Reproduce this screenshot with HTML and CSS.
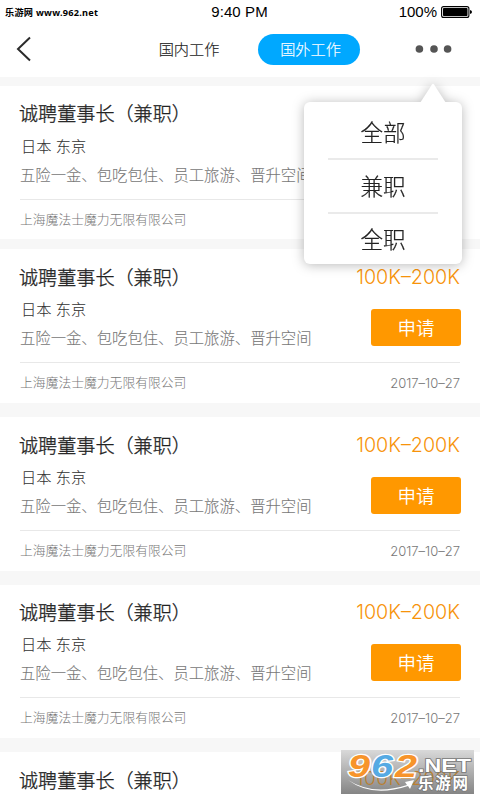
FILE: index.html
```html
<!DOCTYPE html>
<html lang="zh-CN">
<head>
<meta charset="utf-8">
<title>国外工作</title>
<link rel="stylesheet" href="styles.css">
</head>
<body>
<div class="screen">
  <header class="header">
    <div class="status">
      <span class="source">乐游网 www.962.net</span>
      <span class="clock">9:40 PM</span>
      <span class="battery">100%
        <svg width="31" height="12" viewBox="0 0 31 12"><rect x=".6" y=".6" width="27.3" height="10.8" rx="2" fill="none" stroke="#000" stroke-width="1.1"/><rect x="2" y="2" width="24.5" height="8" rx=".7"/><path d="M29 4Q31 4.3 31 6T29 8Z"/></svg>
      </span>
    </div>
    <nav class="nav">
      <svg class="back" width="16" height="26" viewBox="0 0 16 26"><path d="M14 1.5 2 13l12 11.5" fill="none" stroke="#2b2b2b" stroke-width="2"/></svg>
      <span class="tab">国内工作</span>
      <span class="tab active">国外工作</span>
      <svg class="more" width="38" height="8" viewBox="0 0 38 8" fill="#555"><circle cx="4.4" cy="4" r="3.8"/><circle cx="19" cy="4" r="3.8"/><circle cx="32.6" cy="4" r="3.8"/></svg>
    </nav>
  </header>
  <main class="list">
    <article class="card first">
      <div class="row top"><h2>诚聘董事长（兼职）</h2></div>
      <div class="row body"><div><p class="place">日本 东京</p><p class="desc">五险一金、包吃包住、员工旅游、晋升空间</p></div></div>
      <div class="row foot"><span>上海魔法士魔力无限有限公司</span></div>
    </article>
    <article class="card">
      <div class="row top"><h2>诚聘董事长（兼职）</h2><b class="pay">100K–200K</b></div>
      <div class="row body"><div><p class="place">日本 东京</p><p class="desc">五险一金、包吃包住、员工旅游、晋升空间</p></div><span class="apply">申请</span></div>
      <div class="row foot"><span>上海魔法士魔力无限有限公司</span><time>2017–10–27</time></div>
    </article>
    <article class="card">
      <div class="row top"><h2>诚聘董事长（兼职）</h2><b class="pay">100K–200K</b></div>
      <div class="row body"><div><p class="place">日本 东京</p><p class="desc">五险一金、包吃包住、员工旅游、晋升空间</p></div><span class="apply">申请</span></div>
      <div class="row foot"><span>上海魔法士魔力无限有限公司</span><time>2017–10–27</time></div>
    </article>
    <article class="card short">
      <div class="row top"><h2>诚聘董事长（兼职）</h2><b class="pay">100K–200K</b></div>
      <div class="row body"><div><p class="place">日本 东京</p><p class="desc">五险一金、包吃包住、员工旅游、晋升空间</p></div><span class="apply">申请</span></div>
      <div class="row foot"><span>上海魔法士魔力无限有限公司</span><time>2017–10–27</time></div>
    </article>
    <article class="card">
      <div class="row top"><h2>诚聘董事长（兼职）</h2></div>
    </article>
  </main>
  <div class="menu">
    <svg class="arrow" width="26" height="20" viewBox="0 0 26 20"><path d="M0 20 12 1.5Q13 0 14 1.5L26 20Z" fill="#fff"/></svg>
    <span>全部</span><span>兼职</span><span>全职</span>
  </div>
  <svg class="mark" width="133" height="44" viewBox="0 0 133 44">
    <defs><linearGradient id="g" x1="0" y1="0" x2="0" y2="1"><stop offset="0" stop-color="#d9d9d9"/><stop offset="1" stop-color="#858585"/></linearGradient></defs>
    <rect width="133" height="44" fill="url(#g)"/>
    <text class="mark-pay" x="15" y="35" textLength="104">100K–200K</text>
    <g class="mark-num"><text x="7" y="27" textLength="22" lengthAdjust="spacingAndGlyphs" fill="#f7942b">9</text><text x="30" y="27" textLength="22" lengthAdjust="spacingAndGlyphs" fill="#55aae3">6</text><text x="54" y="27" textLength="22" lengthAdjust="spacingAndGlyphs" fill="#f7942b">2</text></g>
    <path d="M7 30Q32 46 66 35l-2-3 9-2-4 9-2-3Q31 48 7 30Z" fill="#fff"/>
    <text class="mark-net" x="77" y="22" textLength="53" lengthAdjust="spacingAndGlyphs">.NET</text>
    <text class="mark-cn" x="77" y="39" textLength="50">乐游网</text>
  </svg>
</div>
</body>
</html>
```
FILE: styles.css
```css
* { box-sizing: border-box; margin: 0; padding: 0; }
body { width: 480px; height: 800px; overflow: hidden; background: #f7f7f7; font-family: "Noto Sans CJK SC", sans-serif; font-weight: 300; color: #222; }
svg { display: block; flex: none; }
.screen { position: relative; height: 800px; overflow: hidden; }
.header { height: 77px; background: #fff; }
.status { height: 24px; display: grid; grid-template-columns: 1fr auto 1fr; align-items: center; padding: 0 8px 0 5px; color: #000; font: 400 15px/24px "Liberation Sans", sans-serif; }
.source { font: 700 9.2px/24px "Noto Sans", "Noto Sans CJK SC", sans-serif; letter-spacing: .25px; padding-top: 1px; white-space: nowrap; }
.clock { letter-spacing: .1px; margin: -2px -1px 0 1px; }
.battery { display: flex; gap: 4px; justify-content: flex-end; align-items: center; line-height: 22px; margin-top: -1px; }
.nav { height: 50px; display: flex; align-items: center; padding-left: 16px; }
.tab { margin-left: 111px; width: 92px; text-align: center; font-size: 15.2px; line-height: 29px; height: 31px; -webkit-text-stroke: .15px; }
.tab.active { margin-left: 23px; width: 102px; padding-left: 3px; border-radius: 16px; background: #00a8ff; color: #fff; }
.more { margin-left: 55px; }
.card { height: 154px; margin-bottom: 14px; padding: 13px 20px 0; background: #fff; }
.card.first { height: 153px; margin: 9px 0 10px; }
.card.short { height: 153px; padding-top: 12px; }
.row { display: flex; justify-content: space-between; }
.top { height: 30px; line-height: 30px; }
.card.first .top { line-height: 29px; }
h2 { margin-left: -1px; font-size: 19.1px; font-weight: 300; -webkit-text-stroke: .3px; }
.pay { font: 300 19.7px/31px Inter, sans-serif; color: #f7930a; }
.body { height: 71px; border-bottom: 1.5px solid #e8e8e8; }
.place { padding-left: 1px; margin-top: 3px; font-size: 15.2px; line-height: 26px; height: 28px; word-spacing: 1px; color: #333; -webkit-text-stroke: .1px; }
.desc { font-size: 15.35px; line-height: 28px; color: #777; white-space: nowrap; -webkit-text-stroke: .1px; }
.apply { width: 90px; height: 37px; margin-top: 17px; margin-right: -1px; border-radius: 3px; background: #ff9800; color: #fff; text-align: center; font-size: 18.5px; line-height: 36px; font-weight: 350; }
.foot { font-size: 12.8px; line-height: 38px; color: #777; }
.foot time { font: 300 13px/41px Inter, sans-serif; }
.menu { position: absolute; left: 304px; top: 102px; width: 158px; height: 162px; padding: 3px 24px; border-radius: 6px; background: #fff; filter: drop-shadow(0 1px 6px rgba(0,0,0,.28)); display: flex; flex-direction: column; text-align: center; font-size: 22.6px; -webkit-text-stroke: .2px; }
.menu span { height: 54px; flex: none; line-height: 52px; border-bottom: 2px solid #eaeaea; }
.menu span:first-of-type { height: 55px; line-height: 53px; }
.menu span:last-child { border: 0; line-height: 49px; }
.arrow { position: absolute; left: 116px; top: -19px; }
.mark { position: absolute; left: 341px; top: 750px; }
.mark text { font-family: "Liberation Sans", "Noto Sans CJK SC", sans-serif; font-weight: 700; }
.mark .mark-pay { font: 300 19px Inter, sans-serif; fill: #b98032; }
.mark-num text { font-size: 31px; font-style: italic; stroke: #fff; stroke-width: 2.5px; paint-order: stroke; }
.mark .mark-net { font-size: 18px; fill: #fff; stroke: #777; stroke-width: 1.5px; paint-order: stroke; }
.mark .mark-cn { font-size: 15.5px; fill: #fff; stroke: #777; stroke-width: 1.5px; paint-order: stroke; }
```
